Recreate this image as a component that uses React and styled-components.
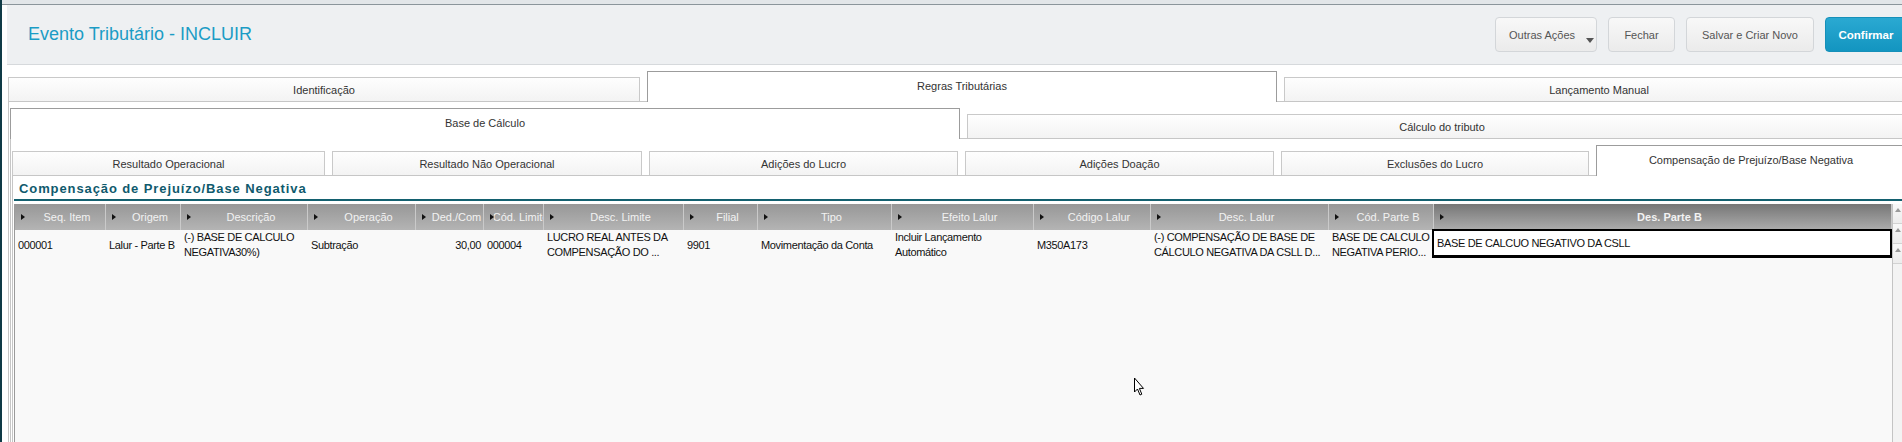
import React from "react";
import styled, { createGlobalStyle, css } from "styled-components";

const Global = createGlobalStyle`
  html, body { margin: 0; padding: 0; overflow: hidden; background: #fff; }
  body { font-family: "Liberation Sans", Arial, sans-serif; }
  * { box-sizing: border-box; }
`;

const Frame = styled.div`
  position: relative;
  width: 1912px;
  height: 442px;
  border-left: 2px solid #0f3a46;
  display: flex;
  flex-direction: column;
  overflow: hidden;
  background: #fff;
`;

const TopStrip = styled.div`
  height: 5px;
  flex: none;
  background: #e2e6e9;
  border-bottom: 1px solid #8b959b;
`;

const Header = styled.header`
  flex: none;
  margin-left: 5px;
  height: 60px;
  background: #eef0f2;
  border-bottom: 1px solid #d6d9dc;
  display: flex;
  align-items: center;
  padding: 0 5px 0 21px;
`;

const Title = styled.h1`
  margin: 0;
  font-size: 18px;
  font-weight: normal;
  color: #1b9cc5;
`;

const Actions = styled.div`
  margin-left: auto;
  display: flex;
  gap: 11px;
`;

const Btn = styled.button`
  width: ${(p) => p.$w}px;
  height: 35px;
  border-radius: 4px;
  font-family: "Liberation Sans", Arial, sans-serif;
  font-size: 11px;
  padding: 0;
  display: flex;
  align-items: center;
  justify-content: center;
  cursor: pointer;
  ${(p) =>
    p.$primary
      ? css`
          border: 1px solid #1690b9;
          background: linear-gradient(#2aa9d2, #1395c0);
          color: #fff;
          font-weight: bold;
          font-size: 11.5px;
        `
      : css`
          border: 1px solid #d3d6d9;
          background: linear-gradient(#f8f8f8, #ebebeb);
          color: #555;
        `}
`;

const DropBtn = styled(Btn)`
  justify-content: flex-start;
  padding-left: 13px;
  align-items: center;
`;

const Caret = styled.span`
  width: 0;
  height: 0;
  border-left: 4px solid transparent;
  border-right: 4px solid transparent;
  border-top: 5px solid #555;
  align-self: flex-end;
  margin: 0 0 8px 11px;
`;

const Level = styled.div`
  display: flex;
  flex-direction: column;
  flex: 1;
  min-height: 0;
  margin-left: ${(p) => p.$ml || 0}px;
`;

const TabRow = styled.div`
  display: flex;
  align-items: flex-end;
  gap: 7px;
  height: 30px;
  flex: none;
  margin-top: ${(p) => p.$mt || 0}px;
`;

const Tab = styled.div`
  flex: none;
  width: ${(p) => p.$w}px;
  border-bottom: none;
  display: flex;
  align-items: center;
  justify-content: center;
  font-size: 11px;
  color: #333;
  white-space: nowrap;
  ${(p) =>
    p.$active
      ? css`
          position: relative;
          z-index: 1;
          height: 31px;
          margin-bottom: -1px;
          background: #fff;
          border: 1px solid #9c9c9c;
          border-bottom: none;
          padding-bottom: 3px;
        `
      : css`
          height: 24px;
          background: linear-gradient(#fefefe, #f3f3f3);
          border: 1px solid #c9c9c9;
          border-bottom: none;
        `}
`;

const Panel = styled.div`
  flex: 1;
  min-height: 0;
  display: flex;
  flex-direction: column;
  border-left: 1px solid #c6c6c6;
  border-top: 1px solid #c6c6c6;
  padding-left: 1px;
  padding-top: ${(p) => p.$pt || 0}px;
`;

const SectionTitle = styled.h2`
  flex: none;
  margin: 0;
  padding: 5px 0 2px 5px;
  line-height: 16px;
  font-size: 13px;
  font-weight: bold;
  letter-spacing: 0.9px;
  color: #0f5a6d;
  border-bottom: 2px solid #13606f;
`;

const Grid = styled.div`
  flex: 1;
  min-height: 0;
  margin-top: 3px;
  width: 1888px;
  display: flex;
  border-left: 1px solid #9a9a9a;
`;

const GridMain = styled.div`
  width: 1877px;
  display: flex;
  flex-direction: column;
`;

const HeaderRow = styled.div`
  display: flex;
  height: 26px;
  flex: none;
`;

const HeaderCell = styled.div`
  flex: none;
  width: ${(p) => p.$w}px;
  display: flex;
  align-items: center;
  padding-left: 6px;
  border-right: 1px solid #cacaca;
  font-size: 11px;
  color: #f2f2f2;
  overflow: hidden;
  background: ${(p) =>
    p.$sel
      ? "linear-gradient(#767676, #adadad)"
      : "linear-gradient(#979797, #b4b4b4)"};
  font-weight: ${(p) => (p.$sel ? "bold" : "normal")};
`;

const Arrow = styled.span`
  flex: none;
  width: 0;
  height: 0;
  border-left: 4px solid #111;
  border-top: 3.5px solid transparent;
  border-bottom: 3.5px solid transparent;
`;

const Label = styled.span`
  flex: 1;
  min-width: 0;
  display: flex;
  justify-content: center;
  overflow: hidden;
  padding-left: 4px;
  white-space: nowrap;
  & > span { flex: none; }
`;

const DataRow = styled.div`
  display: flex;
  height: 30px;
  flex: none;
  background: #f9f9f9;
`;

const Cell = styled.div`
  flex: none;
  width: ${(p) => p.$w}px;
  padding: 0 3px;
  display: flex;
  align-items: center;
  justify-content: ${(p) => (p.$right ? "flex-end" : "flex-start")};
  font-size: 11px;
  letter-spacing: -0.35px;
  line-height: 15px;
  color: #111;
  white-space: nowrap;
  overflow: hidden;
`;

const SelCell = styled(Cell)`
  background: #fff;
  border: 2px solid #000;
  border-bottom-width: 3px;
  margin-left: -2px;
  width: ${(p) => p.$w + 2}px;
  padding-left: 3px;
  height: 29px;
  margin-top: -1px;
`;

const Filler = styled.div`
  flex: 1;
  background: #f9f9f9;
`;

const ScrollBar = styled.div`
  width: 10px;
  flex: none;
  background: #f3f3f3;
  border-left: 1px solid #c4c4c4;
  display: flex;
  flex-direction: column;
`;

const ScrollBtn = styled.div`
  height: 20px;
  flex: none;
  padding: 4px 0 0 2px;
  background: linear-gradient(#f8f8f8, #ececec);
  border-bottom: 1px solid #d2d2d2;
`;

const ScrollTri = styled.span`
  display: block;
  width: 0;
  height: 0;
  border-left: 3px solid transparent;
  border-right: 3px solid transparent;
  border-bottom: 4px solid #9a9a9a;
`;

const Cursor = styled.svg`
  position: absolute;
  left: 1131px;
  top: 377px;
  pointer-events: none;
`;

const cols = [
  { label: "Seq. Item", w: 91, v: "000001" },
  { label: "Origem", w: 75, v: "Lalur - Parte B" },
  { label: "Descrição", w: 127, v: ["(-) BASE DE CALCULO", "NEGATIVA30%)"] },
  { label: "Operação", w: 108, v: "Subtração" },
  { label: "Ded./Com", w: 68, v: "30,00", right: true },
  { label: "Cód. Limite", w: 60, v: "000004" },
  { label: "Desc. Limite", w: 140, v: ["LUCRO REAL ANTES DA", "COMPENSAÇÃO DO ..."] },
  { label: "Filial", w: 74, v: "9901" },
  { label: "Tipo", w: 134, v: "Movimentação da Conta" },
  { label: "Efeito Lalur", w: 142, v: ["Incluir Lançamento", "Automático"] },
  { label: "Código Lalur", w: 117, v: "M350A173" },
  { label: "Desc. Lalur", w: 178, v: ["(-) COMPENSAÇÃO DE BASE DE", "CÁLCULO NEGATIVA DA CSLL D..."] },
  { label: "Cód. Parte B", w: 105, v: ["BASE DE CALCULO", "NEGATIVA PERIO..."] },
  { label: "Des. Parte B", w: 458, v: "BASE DE CALCUO NEGATIVO DA CSLL", sel: true },
];

const renderValue = (v) =>
  Array.isArray(v) ? (
    <span>
      {v[0]}
      <br />
      {v[1]}
    </span>
  ) : (
    v
  );

export default function App() {
  return (
    <>
      <Global />
      <Frame>
        <TopStrip />
        <Header>
          <Title>Evento Tributário - INCLUIR</Title>
          <Actions>
            <DropBtn $w={102}>
              Outras Ações
              <Caret />
            </DropBtn>
            <Btn $w={67}>Fechar</Btn>
            <Btn $w={128}>Salvar e Criar Novo</Btn>
            <Btn $w={82} $primary>
              Confirmar
            </Btn>
          </Actions>
        </Header>

        <Level $ml={6}>
          <TabRow $mt={6}>
            <Tab $w={632}>Identificação</Tab>
            <Tab $w={630} $active>
              Regras Tributárias
            </Tab>
            <Tab $w={630}>Lançamento Manual</Tab>
          </TabRow>
          <Panel $pt={6}>
            <Level>
              <TabRow>
                <Tab $w={950} $active>
                  Base de Cálculo
                </Tab>
                <Tab $w={950}>Cálculo do tributo</Tab>
              </TabRow>
              <Panel $pt={6}>
                <Level>
                  <TabRow>
                    <Tab $w={313}>Resultado Operacional</Tab>
                    <Tab $w={310}>Resultado Não Operacional</Tab>
                    <Tab $w={309}>Adições do Lucro</Tab>
                    <Tab $w={309}>Adições Doação</Tab>
                    <Tab $w={308}>Exclusões do Lucro</Tab>
                    <Tab $w={310} $active>
                      Compensação de Prejuízo/Base Negativa
                    </Tab>
                  </TabRow>
                  <Panel>
                    <SectionTitle>Compensação de Prejuízo/Base Negativa</SectionTitle>
                    <Grid>
                      <GridMain>
                        <HeaderRow>
                          {cols.map((c) => (
                            <HeaderCell key={c.label} $w={c.w} $sel={c.sel}>
                              <Arrow />
                              <Label>
                                <span>{c.label}</span>
                              </Label>
                            </HeaderCell>
                          ))}
                        </HeaderRow>
                        <DataRow>
                          {cols.map((c) =>
                            c.sel ? (
                              <SelCell key={c.label} $w={c.w}>
                                {c.v}
                              </SelCell>
                            ) : (
                              <Cell key={c.label} $w={c.w} $right={c.right}>
                                {renderValue(c.v)}
                              </Cell>
                            )
                          )}
                        </DataRow>
                        <Filler />
                      </GridMain>
                      <ScrollBar>
                        <ScrollBtn>
                          <ScrollTri />
                        </ScrollBtn>
                        <ScrollBtn>
                          <ScrollTri />
                        </ScrollBtn>
                        <ScrollBtn>
                          <ScrollTri />
                        </ScrollBtn>
                      </ScrollBar>
                    </Grid>
                  </Panel>
                </Level>
              </Panel>
            </Level>
          </Panel>
        </Level>

        <Cursor width="12" height="20" viewBox="0 0 12 20">
          <path
            d="M1.5 1 L1.5 15 L4.5 12 L7 18 L8.8 17.2 L6.4 11.4 L10.5 11.4 Z"
            fill="#fff"
            stroke="#000"
            strokeWidth="1"
          />
        </Cursor>
      </Frame>
    </>
  );
}
